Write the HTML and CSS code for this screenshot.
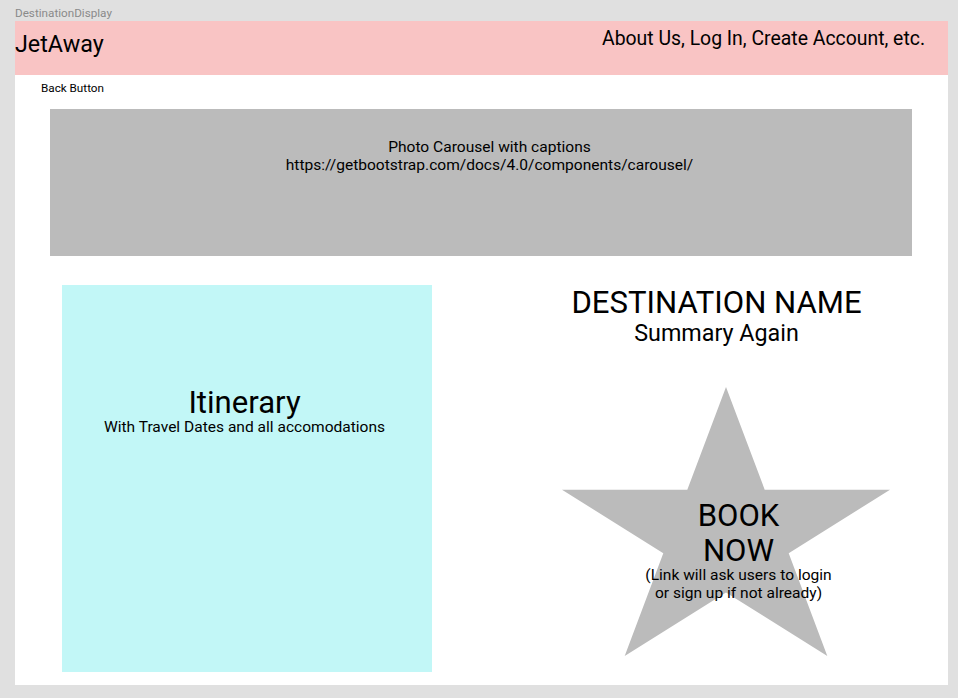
FILE: index.html
```html
<!DOCTYPE html>
<html lang="en">
<head>
<meta charset="utf-8">
<title>DestinationDisplay</title>
<link rel="stylesheet" href="styles.css">
</head>
<body>
  <div class="frame-label">DestinationDisplay</div>
  <main class="frame">
    <header class="topbar">
      <div class="brand">JetAway</div>
      <nav class="nav">About Us, Log In, Create Account, etc.</nav>
    </header>
    <div class="back">Back Button</div>
    <section class="carousel">
      <div class="carousel-text">Photo Carousel with captions<br>https://getbootstrap.com/docs/4.0/components/carousel/</div>
    </section>
    <section class="content">
      <div class="itinerary">
        <div class="itin-title">Itinerary</div>
        <div class="itin-sub">With Travel Dates and all accomodations</div>
      </div>
      <div class="details">
        <h1 class="dest-name">DESTINATION NAME</h1>
        <div class="summary">Summary Again</div>
        <div class="star-wrap">
          <svg class="star" width="328" height="269" viewBox="0 0 328 269">
            <polygon fill="#bbbbbb" points="164,0 202.7,102.7 328,102.7 226.7,166.3 265.3,269 164,205.5 62.7,269 101.3,166.3 0,102.7 125.3,102.7"/>
          </svg>
          <div class="book">
            <div class="book-title">BOOK<br>NOW</div>
            <div class="book-note">(Link will ask users to login<br>or sign up if not already)</div>
          </div>
        </div>
      </div>
    </section>
  </main>
</body>
</html>
```

FILE: styles.css
```css
html, body {
  margin: 0;
  padding: 0;
}
body {
  background: #e0e0e0;
  font-family: Roboto, "Liberation Sans", sans-serif;
  color: #000;
  padding: 0 10px 13px 15px;
  width: 958px;
  height: 698px;
  box-sizing: border-box;
  overflow: hidden;
}
.frame-label {
  font-size: 11.7px;
  line-height: 13px;
  color: #8a8a8a;
  padding-top: 7px;
  margin-bottom: 1px;
}
.frame {
  background: #ffffff;
  width: 933px;
  height: 664px;
  box-sizing: border-box;
}
.topbar {
  background: #f9c4c4;
  height: 54px;
  display: flex;
  justify-content: space-between;
  align-items: flex-start;
}
.brand {
  font-size: 23.3px;
  line-height: 24px;
  margin-top: 11px;
}
.nav {
  font-size: 19.4px;
  line-height: 22px;
  margin-top: 7px;
  margin-right: 23px;
}
.back {
  font-size: 11.7px;
  line-height: 14px;
  padding: 6px 0 0 26px;
  height: 34px;
  box-sizing: border-box;
}
.carousel {
  background: #bbbbbb;
  height: 147px;
  margin: 0 36px 0 35px;
  padding-top: 29px;
  box-sizing: border-box;
}
.carousel-text {
  text-align: center;
  font-size: 15.55px;
  line-height: 18px;
  padding-left: 17px;
}
.content {
  display: flex;
  margin-top: 29px;
  padding-left: 47px;
}
.itinerary {
  background: #c2f7f7;
  width: 370px;
  height: 387px;
  padding: 100px 5px 0 0;
  box-sizing: border-box;
  text-align: center;
  flex-shrink: 0;
}
.itin-title {
  font-size: 31.1px;
  line-height: 35px;
}
.itin-sub {
  font-size: 15.55px;
  line-height: 15px;
}
.details {
  flex: 1;
  margin-left: 53px;
  display: flex;
  flex-direction: column;
  align-items: center;
  padding-top: 1px;
}
.dest-name {
  margin: 0;
  font-weight: normal;
  font-size: 31.1px;
  line-height: 34px;
}
.summary {
  font-size: 23.3px;
  line-height: 26px;
}
.star-wrap {
  position: relative;
  margin-top: 41px;
  margin-left: 19px;
  width: 328px;
  height: 269px;
}
.star {
  display: block;
}
.book {
  position: absolute;
  left: -20px;
  right: -20px;
  top: 111px;
  padding-left: 25px;
  text-align: center;
}
.book-title {
  font-size: 31.1px;
  line-height: 35px;
}
.book-note {
  font-size: 15.55px;
  line-height: 17.5px;
  margin-top: -1px;
}
```
